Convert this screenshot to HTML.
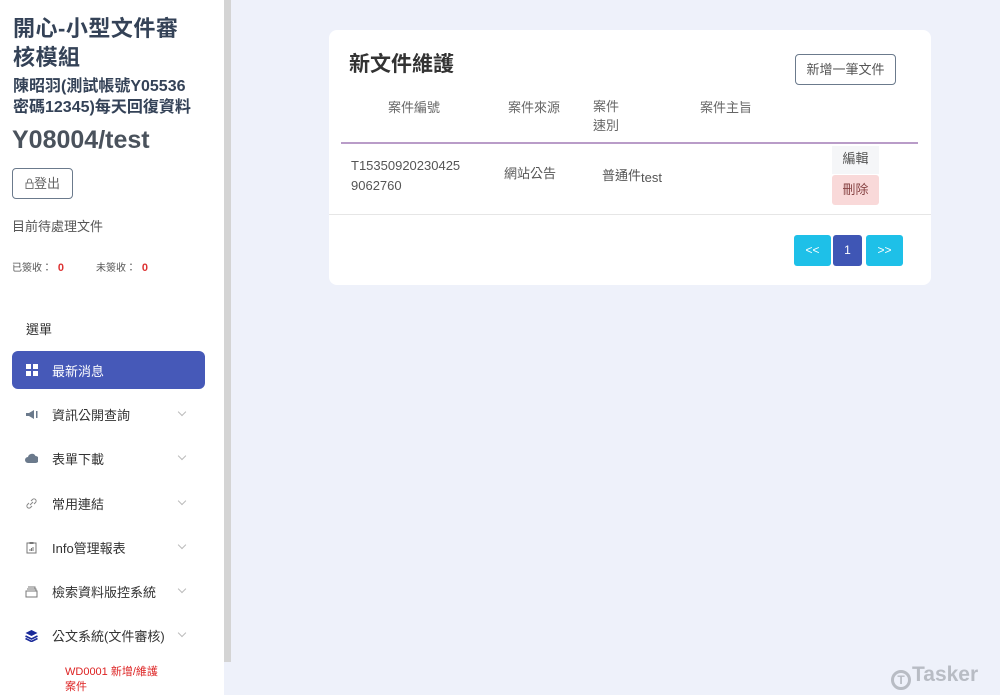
<!DOCTYPE html>
<html><head><meta charset="utf-8"><style>
*{margin:0;padding:0;box-sizing:border-box}
body{width:1000px;height:695px;overflow:hidden;background:#eef1fa;font-family:"Liberation Sans","Noto Sans CJK TC",sans-serif;position:relative;color:#333}
.side{position:absolute;left:0;top:0;width:224px;height:695px;background:#fff}
.sb{position:absolute;left:224px;top:0;width:7px;height:662px;background:#d4d4d4}
.t1{position:absolute;left:13px;top:14px;font-size:22px;font-weight:bold;color:#344257;line-height:29px;width:182px;letter-spacing:0.5px}
.t2{position:absolute;left:13px;top:76px;font-size:16px;font-weight:bold;color:#344257;line-height:21px}
.t3{position:absolute;left:12px;top:126px;font-size:25px;font-weight:bold;color:#4a525c}
.btn{position:absolute;left:12px;top:168px;width:61px;height:31px;border:1px solid #6b7a8c;border-radius:4px;font-size:13px;color:#666;text-align:center;line-height:29px}
.s{position:absolute;font-size:13px;color:#555}
.sm{position:absolute;font-size:10px;color:#555}
.red{color:#d33;font-weight:bold;font-size:11px}
.act{position:absolute;left:12px;top:351px;width:193px;height:38px;background:#4659b8;border-radius:6px;color:#fff;font-size:13px}
.mi{position:absolute;left:52px;font-size:13px;color:#333}
.chev{position:absolute;left:179px;width:6px;height:6px;border-right:1px solid #bbb;border-bottom:1px solid #bbb;transform:rotate(45deg)}
.ic{position:absolute;left:25px;width:13px;height:13px}
.card{position:absolute;left:329px;top:30px;width:602px;height:255px;background:#fff;border-radius:8px}
</style></head><body>
<div class="side">
<div class="t1">開心-小型文件審核模組</div>
<div class="t2">陳昭羽(測試帳號Y05536<br>密碼12345)每天回復資料</div>
<div class="t3">Y08004/test</div>
<div class="btn"><svg width="9" height="11" viewBox="0 0 9 11" style="vertical-align:-1px"><rect x="1" y="5" width="7" height="5.5" fill="none" stroke="#777"/><path d="M2.5 5V3a2 2 0 0 1 4 0v2" fill="none" stroke="#777"/></svg>登出</div>
<div class="s" style="left:12px;top:216px">目前待處理文件</div>
<div class="sm" style="left:12px;top:259px">已簽收： <span class="red">&nbsp;0</span></div>
<div class="sm" style="left:96px;top:259px">未簽收： <span class="red">&nbsp;0</span></div>
<div class="s" style="left:26px;top:319px;color:#333">選單</div>
<div class="act"><svg style="position:absolute;left:14px;top:13px" width="12" height="12"><rect x="0" y="0" width="5" height="5" fill="#fff"/><rect x="7" y="0" width="5" height="5" fill="#fff"/><rect x="0" y="7" width="5" height="5" fill="#fff"/><rect x="7" y="7" width="5" height="5" fill="#fff"/></svg><span style="position:absolute;left:40px;top:10px">最新消息</span></div>
<svg class="ic" style="top:408px" viewBox="0 0 13 13"><path d="M1 5h3l5-3v9l-5-3H1z" fill="#6b7a8c"/><rect x="11" y="3" width="1.5" height="7" fill="#6b7a8c"/></svg>
<div class="mi" style="top:405px">資訊公開查詢</div><div class="chev" style="top:409px"></div>
<svg class="ic" style="top:452px" viewBox="0 0 13 13"><path d="M3 11a3 3 0 0 1 0-6a4 4 0 0 1 7.5-1a3.5 3.5 0 0 1 0 7z" fill="#6b7a8c"/></svg>
<div class="mi" style="top:449px">表單下載</div><div class="chev" style="top:453px"></div>
<svg class="ic" style="top:497px" viewBox="0 0 13 13"><path d="M5 8l3-3M4 6l-1.5 1.5a2 2 0 0 0 3 3L7 9M6 4l1.5-1.5a2 2 0 0 1 3 3L9 7" stroke="#888" fill="none"/></svg>
<div class="mi" style="top:494px">常用連結</div><div class="chev" style="top:498px"></div>
<svg class="ic" style="top:541px" viewBox="0 0 13 13"><rect x="2" y="2" width="9" height="10" fill="none" stroke="#777"/><rect x="4.5" y="1" width="4" height="2" fill="#777"/><path d="M5 10V8M6.5 10V7M8 10V6" stroke="#777"/></svg>
<div class="mi" style="top:538px">Info管理報表</div><div class="chev" style="top:542px"></div>
<svg class="ic" style="top:585px" viewBox="0 0 13 13"><path d="M1 6h11v6H1z M2 4h9v2 M3 2h7v2" stroke="#777" fill="none"/></svg>
<div class="mi" style="top:582px">檢索資料版控系統</div><div class="chev" style="top:586px"></div>
<svg class="ic" style="top:629px" viewBox="0 0 13 13"><path d="M6.5 1l6 3-6 3-6-3z" fill="#1a2a9a"/><path d="M0.5 7l6 3 6-3M0.5 9.5l6 3 6-3" stroke="#1a2a9a" stroke-width="1.6" fill="none"/></svg>
<div class="mi" style="top:626px">公文系統(文件審核)</div><div class="chev" style="top:630px"></div>
<div style="position:absolute;left:65px;top:665px;font-size:11px;color:#d22;line-height:15px">WD0001 新增/維護<br>案件</div>
</div>
<div class="sb"></div>
<div class="card">
<div style="position:absolute;left:20px;top:18px;font-size:21px;font-weight:bold;color:#333">新文件維護</div>
<div style="position:absolute;left:466px;top:24px;width:101px;height:31px;border:1px solid #6b7a8c;border-radius:4px;font-size:13px;color:#555;text-align:center;line-height:29px">新增一筆文件</div>
<div class="s" style="left:59px;top:67px;color:#666">案件編號</div>
<div class="s" style="left:179px;top:67px;color:#666">案件來源</div>
<div class="s" style="left:264px;top:67px;color:#666;line-height:19px">案件<br>速別</div>
<div class="s" style="left:371px;top:67px;color:#666">案件主旨</div>
<div style="position:absolute;left:12px;top:112px;width:577px;height:2px;background:#b99cc8"></div>
<div class="s" style="left:22px;top:126px;line-height:20px">T15350920230425<br>9062760</div>
<div class="s" style="left:175px;top:133px">網站公告</div>
<div class="s" style="left:273px;top:135px">普通件<span style="position:relative;top:2px">test</span></div>
<div style="position:absolute;left:503px;top:116px;width:47px;height:28px;background:#f5f6f8;font-size:13px;text-align:center;line-height:26px;color:#555">編輯</div>
<div style="position:absolute;left:503px;top:145px;width:47px;height:30px;background:#f9d9d9;border-radius:3px;font-size:13px;text-align:center;line-height:30px;color:#844">刪除</div>
<div style="position:absolute;left:0;top:184px;width:602px;height:1px;background:#e6e6e6"></div>
<div style="position:absolute;left:465px;top:205px;width:37px;height:31px;background:#1ec0e8;border-radius:3px;color:#fff;font-size:12px;text-align:center;line-height:31px">&lt;&lt;</div>
<div style="position:absolute;left:504px;top:205px;width:29px;height:31px;background:#3f56b5;border-radius:3px;color:#fff;font-size:12px;text-align:center;line-height:31px">1</div>
<div style="position:absolute;left:537px;top:205px;width:37px;height:31px;background:#1ec0e8;border-radius:3px;color:#fff;font-size:12px;text-align:center;line-height:31px">&gt;&gt;</div>
</div>
<div style="position:absolute;left:891px;top:663px;font-size:21px;font-weight:bold;color:#b8bcc4;white-space:nowrap;line-height:24px"><span style="display:inline-block;width:20px;height:20px;border:3px solid #b8bcc4;border-radius:50%;vertical-align:-3px;font-size:12px;text-align:center;line-height:14px;margin-right:1px">T</span>Tasker</div>
</body></html>
